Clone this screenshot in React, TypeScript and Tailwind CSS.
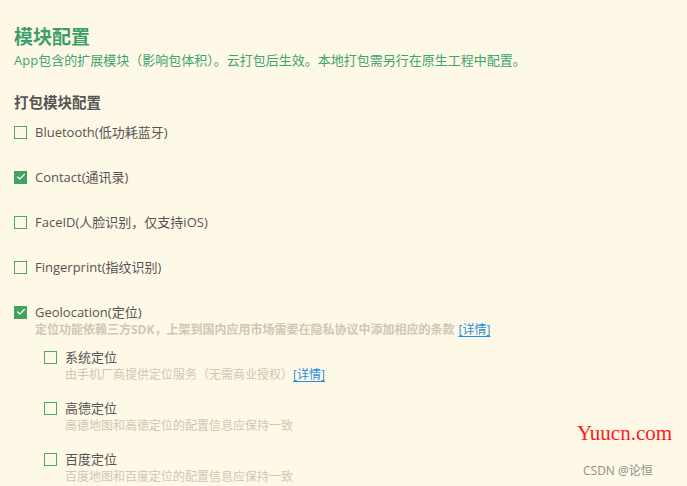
import { Check } from "lucide-react";

type Sub = { label: string; desc: string; link?: boolean };

const modules: { label: string; checked: boolean }[] = [
  { label: "Bluetooth(低功耗蓝牙)", checked: false },
  { label: "Contact(通讯录)", checked: true },
  { label: "FaceID(人脸识别，仅支持iOS)", checked: false },
  { label: "Fingerprint(指纹识别)", checked: false },
];

const geoSubs: Sub[] = [
  { label: "系统定位", desc: "由手机厂商提供定位服务（无需商业授权）", link: true },
  { label: "高德定位", desc: "高德地图和高德定位的配置信息应保持一致" },
  { label: "百度定位", desc: "百度地图和百度定位的配置信息应保持一致" },
];

function Box({ checked }: { checked: boolean }) {
  return checked ? (
    <span className="flex h-[13px] w-[13px] shrink-0 items-center justify-center bg-[#42a262]">
      <Check size={10} strokeWidth={3} className="text-white" />
    </span>
  ) : (
    <span className="h-[13px] w-[13px] shrink-0 border border-[#4aa766] bg-transparent" />
  );
}

function Row({ label, checked }: { label: string; checked: boolean }) {
  return (
    <div className="flex h-[18px] items-center gap-2 text-[13px] leading-[18px] text-[#555]">
      <Box checked={checked} />
      <span>{label}</span>
    </div>
  );
}

export default function App() {
  return (
    <div
      className="relative h-[486px] w-[687px] overflow-hidden bg-[#fef8e6] pl-[14px] pt-[24px]"
      style={{ fontFamily: '"Open Sans", "Noto Sans CJK SC", sans-serif' }}
    >
      <h1 className="text-[19px] font-bold leading-[26px] text-[#3c9f68]">模块配置</h1>
      <p className="text-[13px] leading-[20px] text-[#40a56b]">
        App包含的扩展模块（影响包体积）。云打包后生效。本地打包需另行在原生工程中配置。
      </p>

      <h2 className="mt-[24px] text-[14.5px] font-bold leading-[18px] text-[#555]">打包模块配置</h2>

      <div className="mt-[11px] flex flex-col gap-[27px]">
        {modules.map((m) => (
          <Row key={m.label} label={m.label} checked={m.checked} />
        ))}

        <div>
          <Row label="Geolocation(定位)" checked />
          <p className="pl-[21px] text-[12px] font-bold leading-[17px] text-[#cfc7b5]">
            定位功能依赖三方SDK，上架到国内应用市场需要在隐私协议中添加相应的条款
            <a className="ml-1 font-normal text-[#1d8fe0] underline underline-offset-2">[详情]</a>
          </p>

          <div className="mt-[10px] flex flex-col gap-[16px] pl-[30px]">
            {geoSubs.map((s) => (
              <div key={s.label}>
                <Row label={s.label} checked={false} />
                <p className="pl-[21px] text-[12px] leading-[17px] text-[#cfc7b5]">
                  {s.desc}
                  {s.link && (
                    <a className="text-[#1d8fe0] underline underline-offset-2">[详情]</a>
                  )}
                </p>
              </div>
            ))}
          </div>
        </div>
      </div>

      <span
        className="absolute left-[577px] top-[418px] text-[21px] text-[#ff1a1a]"
        style={{ fontFamily: '"Liberation Serif", serif' }}
      >
        Yuucn.com
      </span>
      <span className="absolute left-[583px] top-[462px] text-[12px] text-[#8f8f8f]">CSDN @论恒</span>
    </div>
  );
}
